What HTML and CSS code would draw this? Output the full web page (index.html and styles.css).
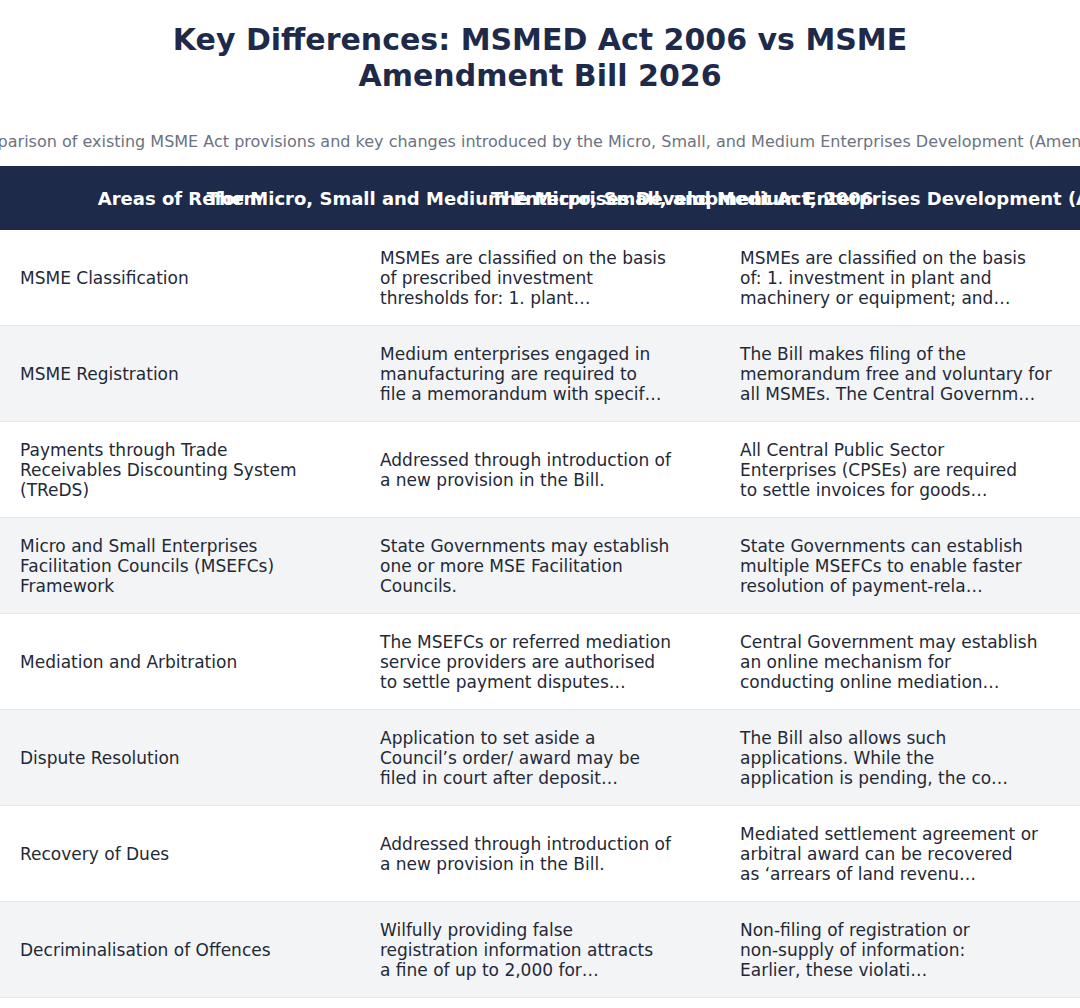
FILE: index.html
```html
<!DOCTYPE html>
<html lang="en">
<head>
    <meta charset="UTF-8">
    <title>Key Differences: MSMED Act 2006 vs MSME Amendment Bill 2026</title>
    <link rel="stylesheet" href="styles.css">
</head>
<body>
    <header class="page-header">
        <h1 class="page-title">Key Differences: MSMED Act 2006 vs MSME Amendment Bill 2026</h1>
        <div class="page-subtitle"><p>Side-by-side comparison of existing MSME Act provisions and key changes introduced by the Micro, Small, and Medium Enterprises Development (Amendment) Bill, 2026</p></div>
    </header>

    <div class="compare-table">
        <div class="table-head">
            <div class="head-cell"><span>Areas of Reform</span></div>
            <div class="head-cell"><span>The Micro, Small and Medium Enterprises Development Act, 2006</span></div>
            <div class="head-cell"><span>The Micro, Small, and Medium Enterprises Development (Amendment) Bill, 2026</span></div>
        </div>

        <div class="table-row">
            <div class="cell area">MSME Classification</div>
            <div class="cell old">MSMEs are classified on the basis of prescribed investment thresholds for: 1. plant…</div>
            <div class="cell new">MSMEs are classified on the basis of:&nbsp;1. investment in plant and machinery or equipment; and…</div>
        </div>
        <div class="table-row">
            <div class="cell area">MSME Registration</div>
            <div class="cell old">Medium enterprises engaged in manufacturing are required to file&nbsp;a memorandum with specif…</div>
            <div class="cell new">The Bill makes filing of the memorandum free and voluntary for all MSMEs. The Central Governm…</div>
        </div>
        <div class="table-row">
            <div class="cell area">Payments through Trade Receivables Discounting System (TReDS)</div>
            <div class="cell old">Addressed through introduction of a new provision in the Bill.</div>
            <div class="cell new">All Central Public Sector Enterprises&nbsp;(CPSEs) are required to&nbsp;settle invoices for goods…</div>
        </div>
        <div class="table-row">
            <div class="cell area">Micro and Small Enterprises Facilitation Councils (MSEFCs) Framework</div>
            <div class="cell old">State Governments may establish one or more MSE Facilitation Councils.</div>
            <div class="cell new">State Governments can establish multiple MSEFCs to enable faster resolution of payment-rela…</div>
        </div>
        <div class="table-row">
            <div class="cell area">Mediation and Arbitration</div>
            <div class="cell old">The MSEFCs or referred mediation service providers are authorised to settle payment disputes…</div>
            <div class="cell new">Central Government may establish an online mechanism for conducting&nbsp;online mediation…</div>
        </div>
        <div class="table-row">
            <div class="cell area">Dispute Resolution</div>
            <div class="cell old">Application to set aside a Council’s order/ award may be filed in court after deposit…</div>
            <div class="cell new">The Bill also allows such applications. While the application&nbsp;is&nbsp;pending, the co…</div>
        </div>
        <div class="table-row">
            <div class="cell area">Recovery of Dues</div>
            <div class="cell old">Addressed through introduction of a new provision in the Bill.</div>
            <div class="cell new">Mediated settlement agreement or arbitral award can be recovered as&nbsp;‘arrears of land revenu…</div>
        </div>
        <div class="table-row">
            <div class="cell area">Decriminalisation of Offences</div>
            <div class="cell old">Wilfully providing false registration information attracts a&nbsp;fine of up to 2,000 for…</div>
            <div class="cell new">Non-filing of registration or <span class="nowrap">non-supply</span> of information: Earlier,&nbsp;these violati…</div>
        </div>
    </div>
</body>
</html>
```

FILE: styles.css
```css
body { margin: 0; font-family: "DejaVu Sans", sans-serif; background-color: #ffffff; color: #1f2937; overflow: hidden; }
.page-header { padding-top: 22px; }
.page-title { max-width: 800px; margin: 0 auto; text-align: center; font-size: 30px; line-height: 36px; font-weight: bold; color: #1e2a4a; }
.page-subtitle { display: flex; justify-content: center; margin: 38px 0 15px; }
.page-subtitle p { margin: 0; flex-shrink: 0; white-space: nowrap; font-size: 16px; line-height: 19px; color: #6b7280; }
.compare-table { width: 1080px; }
.table-head { display: grid; grid-template-columns: 360px 360px 360px; height: 64px; background-color: #1e2a4a; }
.head-cell { display: flex; justify-content: center; align-items: center; min-width: 0; }
.head-cell span { flex-shrink: 0; white-space: nowrap; color: #ffffff; font-size: 18px; font-weight: bold; }
.table-row { display: grid; grid-template-columns: 360px 360px 360px; align-items: center; min-height: 95px; border-bottom: 1px solid #e5e7eb; }
.table-row:nth-child(odd) { background-color: #f3f4f6; }
.cell { padding: 18px 20px 17px; font-size: 17px; line-height: 20px; }
.cell.area { padding-right: 40px; }
.cell.old { padding-right: 44px; }
.cell.new { padding-right: 27px; }
.nowrap { white-space: nowrap; }
```
